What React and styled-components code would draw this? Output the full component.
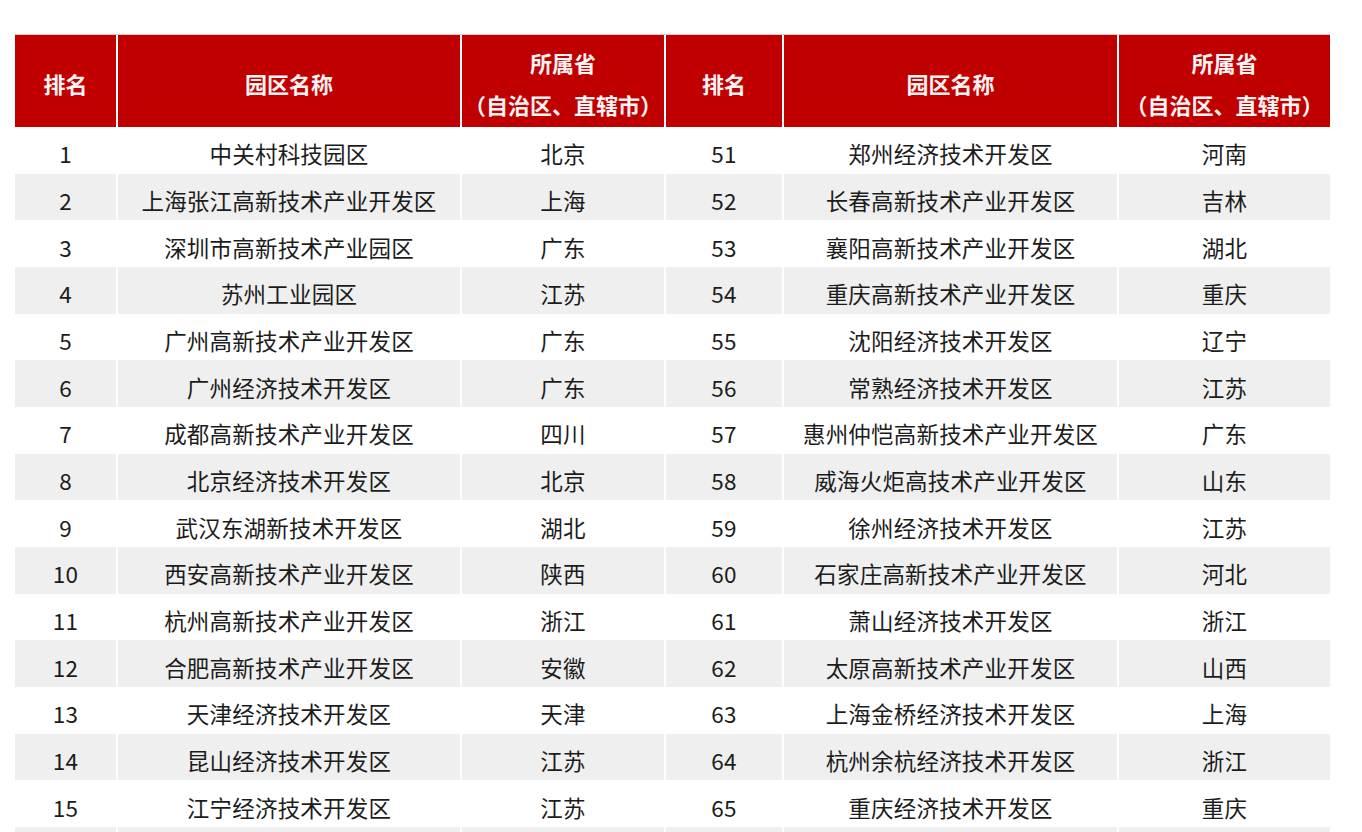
import React from "react";
import styled, { createGlobalStyle } from "styled-components";

const GlobalStyle = createGlobalStyle`
  html, body {
    margin: 0;
    padding: 0;
    background: #ffffff;
    font-family: "Noto Sans CJK SC", "Noto Sans", sans-serif;
  }
`;

const left = [
  ["1", "中关村科技园区", "北京"],
  ["2", "上海张江高新技术产业开发区", "上海"],
  ["3", "深圳市高新技术产业园区", "广东"],
  ["4", "苏州工业园区", "江苏"],
  ["5", "广州高新技术产业开发区", "广东"],
  ["6", "广州经济技术开发区", "广东"],
  ["7", "成都高新技术产业开发区", "四川"],
  ["8", "北京经济技术开发区", "北京"],
  ["9", "武汉东湖新技术开发区", "湖北"],
  ["10", "西安高新技术产业开发区", "陕西"],
  ["11", "杭州高新技术产业开发区", "浙江"],
  ["12", "合肥高新技术产业开发区", "安徽"],
  ["13", "天津经济技术开发区", "天津"],
  ["14", "昆山经济技术开发区", "江苏"],
  ["15", "江宁经济技术开发区", "江苏"],
];

const right = [
  ["51", "郑州经济技术开发区", "河南"],
  ["52", "长春高新技术产业开发区", "吉林"],
  ["53", "襄阳高新技术产业开发区", "湖北"],
  ["54", "重庆高新技术产业开发区", "重庆"],
  ["55", "沈阳经济技术开发区", "辽宁"],
  ["56", "常熟经济技术开发区", "江苏"],
  ["57", "惠州仲恺高新技术产业开发区", "广东"],
  ["58", "威海火炬高技术产业开发区", "山东"],
  ["59", "徐州经济技术开发区", "江苏"],
  ["60", "石家庄高新技术产业开发区", "河北"],
  ["61", "萧山经济技术开发区", "浙江"],
  ["62", "太原高新技术产业开发区", "山西"],
  ["63", "上海金桥经济技术开发区", "上海"],
  ["64", "杭州余杭经济技术开发区", "浙江"],
  ["65", "重庆经济技术开发区", "重庆"],
];

const Page = styled.div`
  padding: 34px 0 0 15px;
`;

const Table = styled.div`
  display: flex;
  flex-direction: column;
  width: 1315px;
`;

// header and body rows share the same column template; the 2px column gap
// shows the page white between cells, as in the source table
const Row = styled.div`
  display: grid;
  grid-template-columns: 101px 342px 202px 116px 333px 211px;
  column-gap: 2px;
  height: ${({ $head }) => ($head ? "92px" : "46.67px")};
  border-top: ${({ $head }) => ($head ? "1px solid #f3c6c6" : "none")};
`;

const HeadCell = styled.div`
  display: flex;
  flex-direction: column;
  align-items: center;
  justify-content: center;
  gap: 6px;
  background: #c00000;
  color: #fff4f4;
  font-size: 22px;
  font-weight: 700;
  line-height: 36px;
  padding-top: 4px;
  box-sizing: border-box;
`;

const Cell = styled.div`
  display: flex;
  align-items: center;
  justify-content: center;
  padding-top: 6px;
  box-sizing: border-box;
  background: ${({ $alt }) => ($alt ? "#efefef" : "#ffffff")};
  color: #1c1c1c;
  font-size: 22.5px;
  font-weight: 400;
  white-space: nowrap;
  letter-spacing: 0.2px;
`;

const headers = ["排名", "园区名称", ["所属省", "（自治区、直辖市）"]];

export default function App() {
  const rows = left.map((l, i) => [...l, ...right[i]]);
  rows.push(["", "", "", "", "", ""]);
  return (
    <Page>
      <GlobalStyle />
      <Table>
        <Row $head>
          {[...headers, ...headers].map((h, i) => (
            <HeadCell key={i}>
              {Array.isArray(h) ? h.map((t) => <span key={t}>{t}</span>) : h}
            </HeadCell>
          ))}
        </Row>
        {rows.map((r, i) => (
          <Row key={i}>
            {r.map((c, j) => (
              <Cell key={j} $alt={i % 2 === 1}>
                {c}
              </Cell>
            ))}
          </Row>
        ))}
      </Table>
    </Page>
  );
}
